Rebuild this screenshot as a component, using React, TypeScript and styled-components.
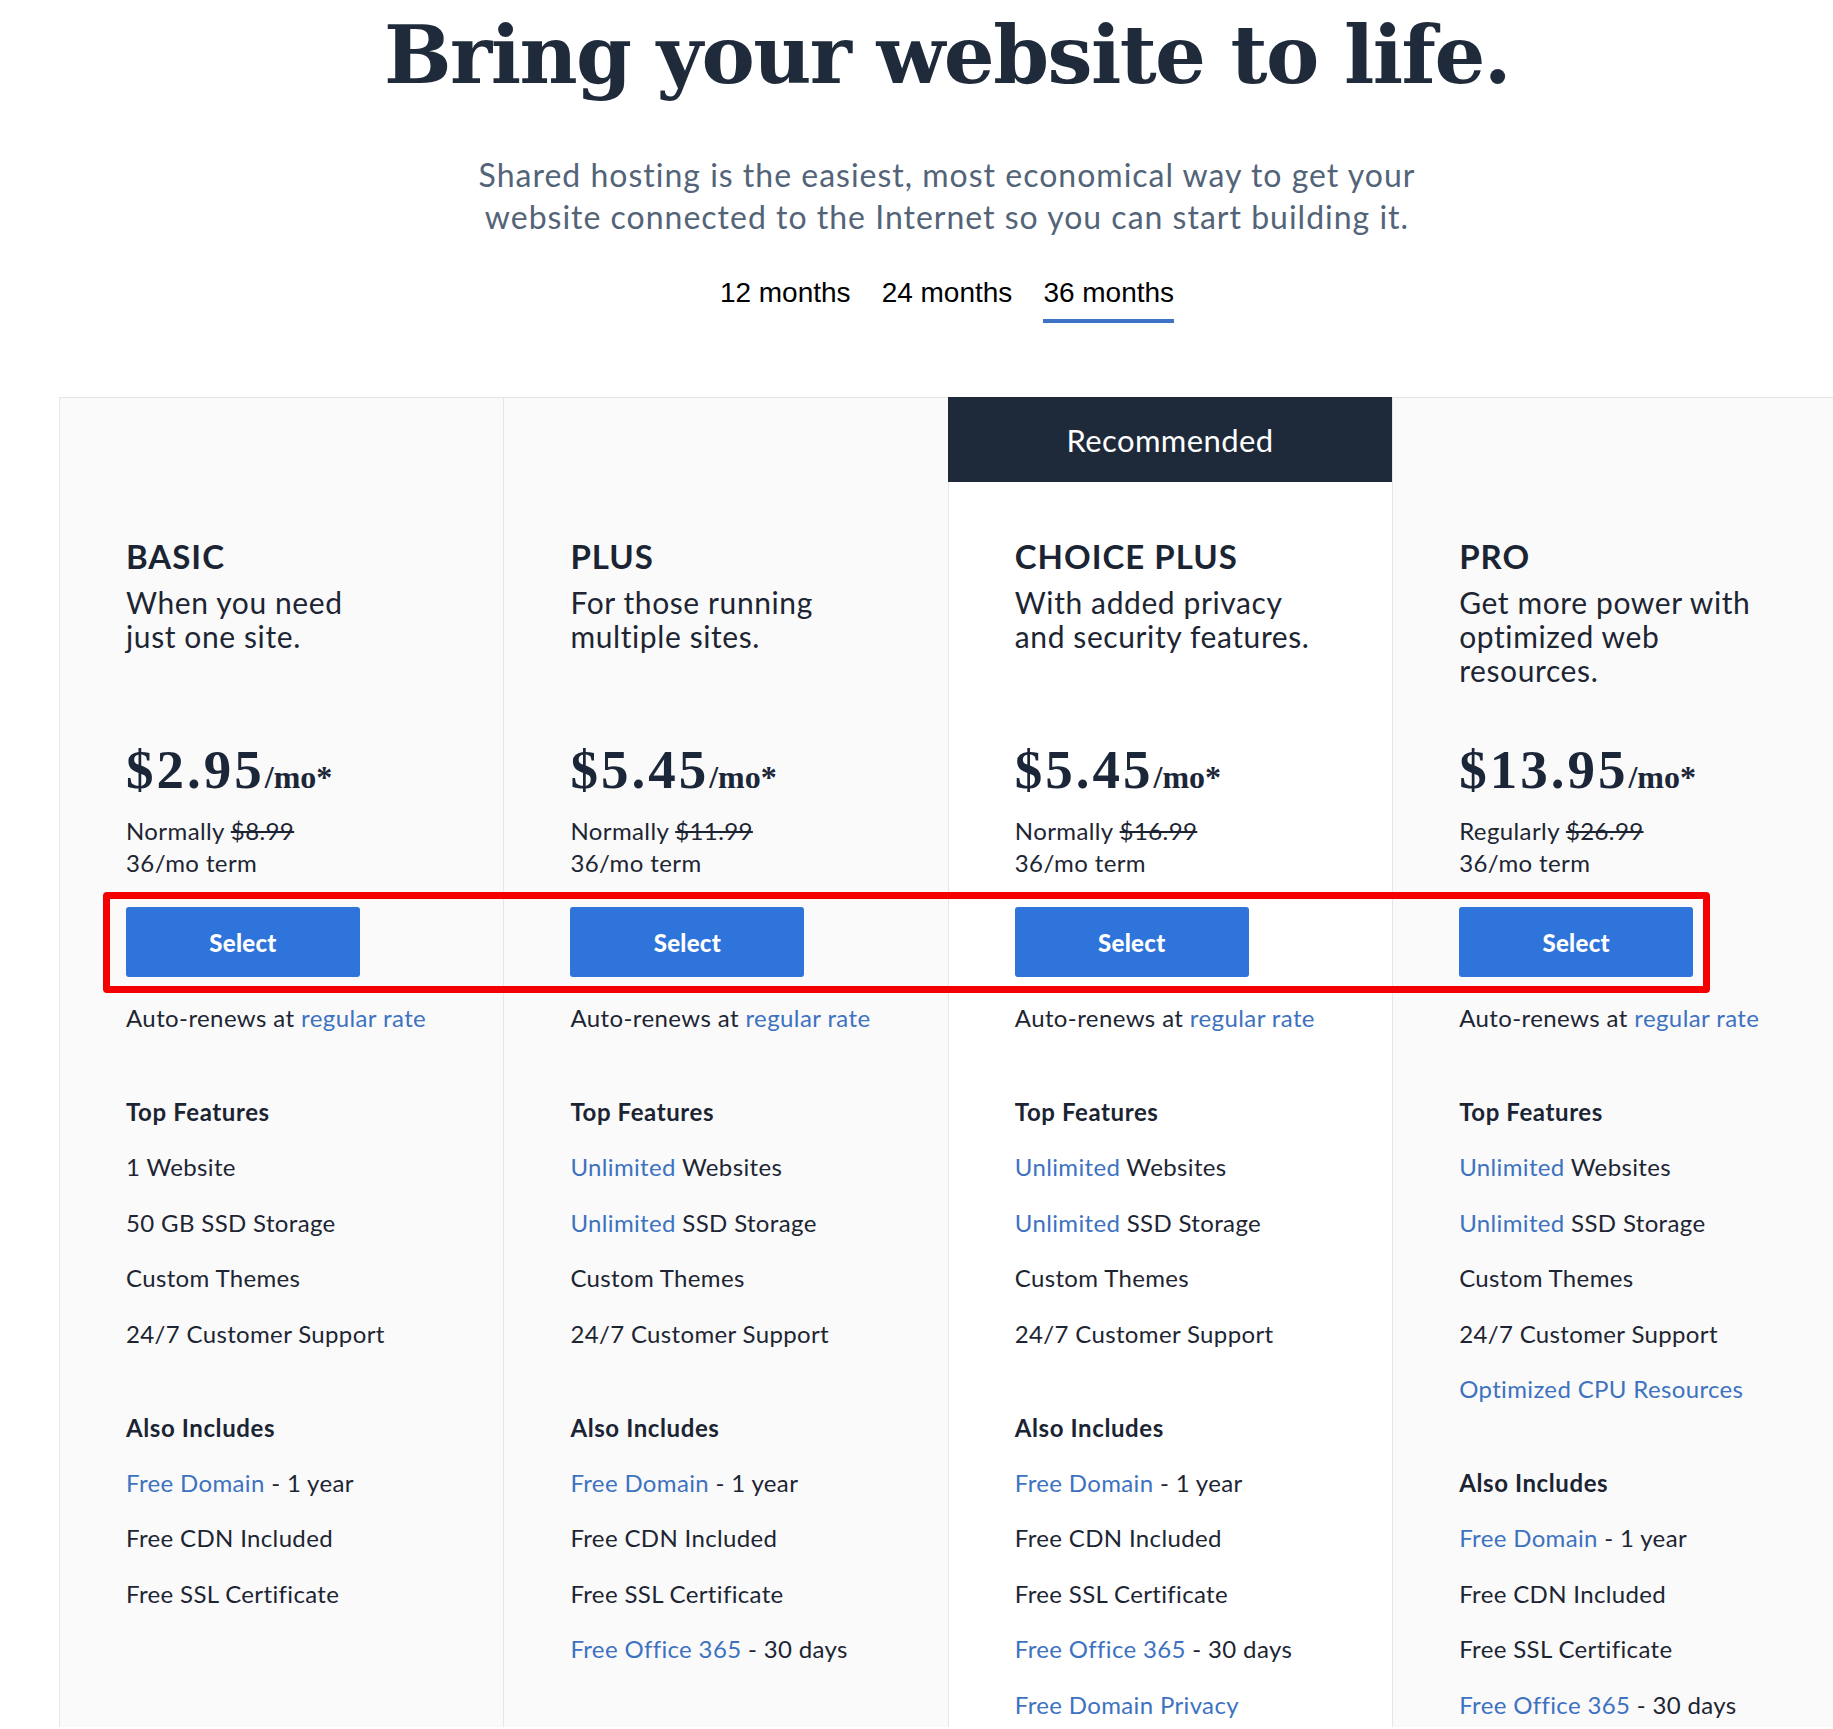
import * as React from "react";
import styled, { createGlobalStyle } from "styled-components";

const GlobalStyle = createGlobalStyle`
  html, body {
    margin: 0;
    padding: 0;
    background: #fff;
    overflow: hidden;
  }
  body {
    font-family: 'Lato', 'Noto Sans', sans-serif;
    color: #1d2533;
  }
`;

interface Item {
  link?: string;
  text?: string;
}

interface Plan {
  name: string;
  desc: string[];
  price: string;
  label: string;
  old: string;
  recommended?: boolean;
  features: Item[];
  also: Item[];
}

const baseFeatures: Item[] = [
  { link: "Unlimited", text: " Websites" },
  { link: "Unlimited", text: " SSD Storage" },
  { text: "Custom Themes" },
  { text: "24/7 Customer Support" },
];

const plans: Plan[] = [
  {
    name: "BASIC",
    desc: ["When you need", "just one site."],
    price: "$2.95",
    label: "Normally",
    old: "$8.99",
    features: [
      { text: "1 Website" },
      { text: "50 GB SSD Storage" },
      { text: "Custom Themes" },
      { text: "24/7 Customer Support" },
    ],
    also: [
      { link: "Free Domain", text: " - 1 year" },
      { text: "Free CDN Included" },
      { text: "Free SSL Certificate" },
    ],
  },
  {
    name: "PLUS",
    desc: ["For those running", "multiple sites."],
    price: "$5.45",
    label: "Normally",
    old: "$11.99",
    features: baseFeatures,
    also: [
      { link: "Free Domain", text: " - 1 year" },
      { text: "Free CDN Included" },
      { text: "Free SSL Certificate" },
      { link: "Free Office 365", text: " - 30 days" },
    ],
  },
  {
    name: "CHOICE PLUS",
    desc: ["With added privacy", "and security features."],
    price: "$5.45",
    label: "Normally",
    old: "$16.99",
    recommended: true,
    features: baseFeatures,
    also: [
      { link: "Free Domain", text: " - 1 year" },
      { text: "Free CDN Included" },
      { text: "Free SSL Certificate" },
      { link: "Free Office 365", text: " - 30 days" },
      { link: "Free Domain Privacy" },
    ],
  },
  {
    name: "PRO",
    desc: ["Get more power with", "optimized web", "resources."],
    price: "$13.95",
    label: "Regularly",
    old: "$26.99",
    features: [...baseFeatures, { link: "Optimized CPU Resources" }],
    also: [
      { link: "Free Domain", text: " - 1 year" },
      { text: "Free CDN Included" },
      { text: "Free SSL Certificate" },
      { link: "Free Office 365", text: " - 30 days" },
    ],
  },
];

const Page = styled.div`
  width: 1776px;
  height: 1729px;
  margin-left: 59px;
  overflow: hidden;
`;

const Hero = styled.header`
  display: flex;
  flex-direction: column;
  align-items: center;
  text-align: center;
`;

const Title = styled.h1`
  margin: 15px 0 0;
  font-family: 'DejaVu Serif', 'Liberation Serif', serif;
  font-weight: 700;
  font-size: 80px;
  line-height: 80px;
  letter-spacing: -1.6px;
  color: #1f2a3a;
`;

const Subtitle = styled.p`
  margin: 59px 0 0;
  font-size: 32px;
  line-height: 42px;
  letter-spacing: 1px;
  color: #536478;
`;

const Tabs = styled.nav`
  display: flex;
  gap: 31px;
  margin-top: 39px;
`;

const Tab = styled.span<{ $active?: boolean }>`
  font-family: 'Liberation Sans', Arial, sans-serif;
  font-size: 28px;
  line-height: 32px;
  color: #000;
  padding-bottom: 10px;
  border-bottom: 4px solid ${(p) => (p.$active ? "#3d74c6" : "transparent")};
`;

const Plans = styled.section`
  position: relative;
  display: grid;
  grid-template-columns: repeat(4, 444.4px);
  margin-top: 74px;
  height: 1330px;
`;

const Column = styled.div<{ $featured?: boolean }>`
  display: flex;
  flex-direction: column;
  background: ${(p) => (p.$featured ? "#fff" : "#fafafa")};
  border-left: 1px solid #e6e6e6;
  border-top: 1px solid #e6e6e6;
`;

const Banner = styled.div<{ $show?: boolean }>`
  height: 85px;
  margin: -1px 0 0 -1px;
  display: flex;
  align-items: center;
  justify-content: center;
  background: ${(p) => (p.$show ? "#1e2a3a" : "transparent")};
  color: #fff;
  font-size: 31px;
  letter-spacing: 0.4px;
`;

const Body = styled.div`
  padding: 54px 0 0 66px;
`;

const Head = styled.div`
  height: 204px;
`;

const PlanName = styled.h2`
  margin: 0;
  font-size: 33px;
  line-height: 40px;
  font-weight: 700;
  letter-spacing: 1px;
  color: #1b2433;
`;

const Desc = styled.p`
  margin: 9px 0 0;
  font-size: 30px;
  line-height: 34px;
  letter-spacing: 0.6px;
  color: #1d2533;
`;

const Price = styled.div`
  font-family: 'Liberation Serif', 'Times New Roman', serif;
  font-weight: 700;
  font-size: 55px;
  line-height: 60px;
  letter-spacing: 3px;
  color: #1b2738;
`;

const Per = styled.span`
  font-size: 32px;
  letter-spacing: 0;
`;

const Small = styled.div`
  font-size: 24px;
  line-height: 32px;
  letter-spacing: 0.4px;
`;

const Old = styled.s`
  text-decoration-thickness: 2px;
`;

const Normally = styled(Small)`
  margin-top: 8px;
`;

const SelectButton = styled.button`
  display: block;
  width: 234px;
  height: 70px;
  margin-top: 28px;
  border: 0;
  border-radius: 3px;
  background: #2e74da;
  color: #fff;
  font-family: 'Lato', sans-serif;
  font-weight: 900;
  font-size: 24px;
  letter-spacing: 0.3px;
  cursor: pointer;
`;

const Renew = styled(Small)`
  margin-top: 25px;
`;

const Link = styled.span`
  color: #3d72c1;
`;

const SectionTitle = styled(Small)`
  margin-top: 62px;
  font-weight: 700;
  letter-spacing: 0.6px;
  color: #1b2433;
`;

const List = styled.ul`
  list-style: none;
  margin: 23px 0 0;
  padding: 0;
  display: flex;
  flex-direction: column;
  gap: 23.5px;
`;

const ListItem = styled.li`
  font-size: 24px;
  line-height: 32px;
  letter-spacing: 0.35px;
`;

const Highlight = styled.div`
  position: absolute;
  left: 44px;
  top: 495px;
  width: 1607px;
  height: 101px;
  box-sizing: border-box;
  border: 7px solid #f40000;
  border-radius: 4px;
  pointer-events: none;
`;

const ItemRow = ({ item }: { item: Item }) => (
  <ListItem>
    {item.link && <Link>{item.link}</Link>}
    {item.text}
  </ListItem>
);

const PlanColumn = ({ plan }: { plan: Plan }) => (
  <Column $featured={plan.recommended}>
    <Banner $show={plan.recommended}>{plan.recommended ? "Recommended" : ""}</Banner>
    <Body>
      <Head>
        <PlanName>{plan.name}</PlanName>
        <Desc>
          {plan.desc.map((line, i) => (
            <React.Fragment key={i}>
              {i > 0 && <br />}
              {line}
            </React.Fragment>
          ))}
        </Desc>
      </Head>
      <Price>
        {plan.price}
        <Per>/mo*</Per>
      </Price>
      <Normally>
        {plan.label} <Old>{plan.old}</Old>
      </Normally>
      <Small>36/mo term</Small>
      <SelectButton>Select</SelectButton>
      <Renew>
        Auto-renews at <Link>regular rate</Link>
      </Renew>
      <SectionTitle>Top Features</SectionTitle>
      <List>
        {plan.features.map((f, i) => (
          <ItemRow key={i} item={f} />
        ))}
      </List>
      <SectionTitle>Also Includes</SectionTitle>
      <List>
        {plan.also.map((f, i) => (
          <ItemRow key={i} item={f} />
        ))}
      </List>
    </Body>
  </Column>
);

export default function App() {
  return (
    <>
      <GlobalStyle />
      <Page>
        <Hero>
          <Title>Bring your website to life.</Title>
          <Subtitle>
            Shared hosting is the easiest, most economical way to get your
            <br />
            website connected to the Internet so you can start building it.
          </Subtitle>
          <Tabs>
            <Tab>12 months</Tab>
            <Tab>24 months</Tab>
            <Tab $active>36 months</Tab>
          </Tabs>
        </Hero>
        <Plans>
          {plans.map((p) => (
            <PlanColumn key={p.name} plan={p} />
          ))}
          <Highlight />
        </Plans>
      </Page>
    </>
  );
}
